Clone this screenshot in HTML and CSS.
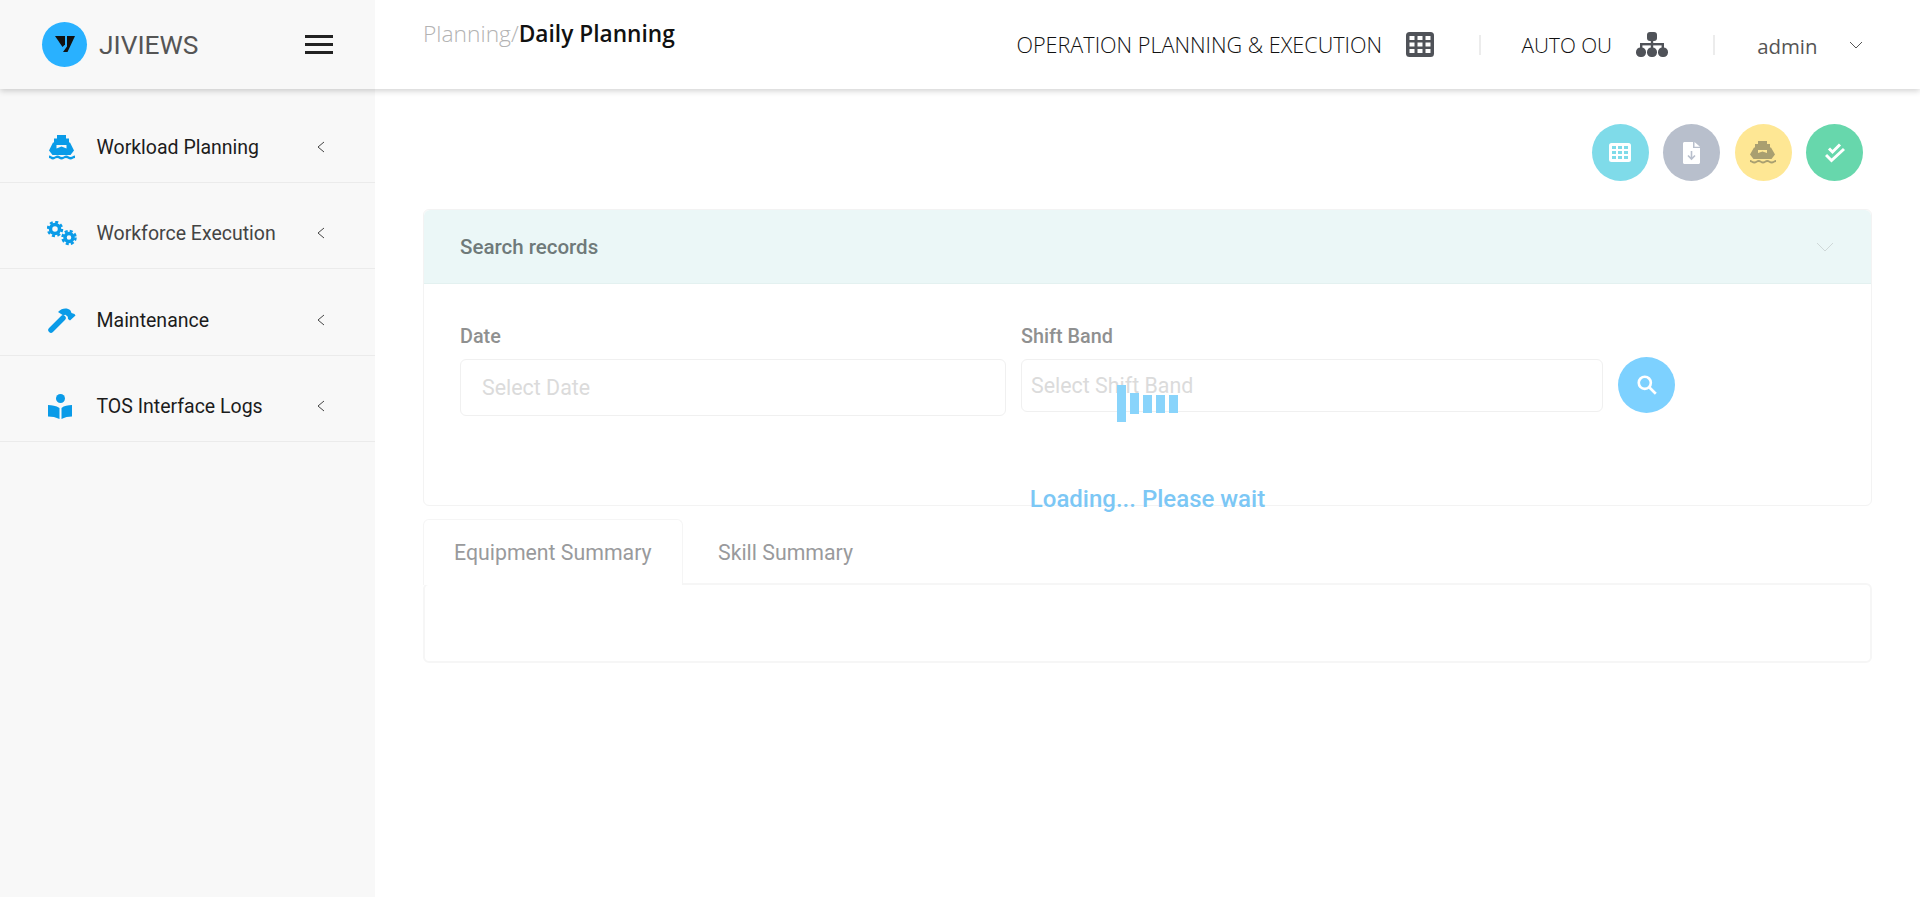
FILE: index.html
```html
<!DOCTYPE html>
<html lang="en">
<head>
    <meta charset="UTF-8">
    <meta name="viewport" content="width=device-width, initial-scale=1.0">
    <title>JIVIEWS - Daily Planning</title>
    <link rel="stylesheet" href="styles.css">
</head>
<body>
    <header class="topbar">
        <div class="brand">
            <span class="brand-logo">
                <svg viewBox="0 0 45 45" width="45" height="45">
                    <polygon fill="#111" points="13,14 23,14 23,22.500 20.500,25"/>
                    <polygon fill="#111" points="25,14 33,14 25.500,30 21,30 25,24.500"/>
                </svg>
            </span>
            <span class="brand-name">JIVIEWS</span>
            <button class="hamburger"><span></span><span></span><span></span></button>
        </div>
        <div class="topnav">
            <div class="crumbs"><span class="crumb-parent">Planning/</span><span class="crumb-current">Daily Planning</span></div>
            <div class="topnav-right">
                <span class="module-name">OPERATION PLANNING &amp; EXECUTION</span>
                <svg class="grid-icon" viewBox="0 0 28 25" width="28" height="25">
                    <rect width="28" height="25" rx="3.500" fill="#4f5258"/>
                    <g fill="#fff">
                        <rect x="3.500" y="4" width="5" height="4"/><rect x="11.500" y="4" width="5" height="4"/><rect x="19.500" y="4" width="5" height="4"/>
                        <rect x="3.500" y="10.500" width="5" height="4"/><rect x="11.500" y="10.500" width="5" height="4"/><rect x="19.500" y="10.500" width="5" height="4"/>
                        <rect x="3.500" y="17" width="5" height="4"/><rect x="11.500" y="17" width="5" height="4"/><rect x="19.500" y="17" width="5" height="4"/>
                    </g>
                </svg>
                <span class="nav-divider divider-one"></span>
                <span class="module-name">AUTO OU</span>
                <svg class="org-icon" viewBox="0 0 32 25" width="32" height="25">
                    <g fill="#4f5258">
                        <rect x="11" y="0" width="10" height="9" rx="3"/>
                        <rect x="14.800" y="8" width="2.400" height="5"/>
                        <rect x="4" y="11" width="24" height="2.400"/>
                        <rect x="4" y="11" width="2.400" height="5"/><rect x="25.600" y="11" width="2.400" height="5"/><rect x="14.800" y="11" width="2.400" height="5"/>
                        <rect x="0" y="15.500" width="10" height="9.500" rx="4.500"/><rect x="11" y="15.500" width="10" height="9.500" rx="4.500"/><rect x="22" y="15.500" width="10" height="9.500" rx="4.500"/>
                    </g>
                </svg>
                <span class="nav-divider divider-two"></span>
                <span class="user-name">admin</span>
                <svg class="user-caret" viewBox="0 0 14 8" width="14" height="8"><polyline points="1,1 7,7 13,1" fill="none" stroke="#555" stroke-width="1"/></svg>
            </div>
        </div>
    </header>

    <div class="layout">
        <aside class="sidebar">
            <nav>
                <a class="menu-item" href="#">
                    <svg class="menu-icon" viewBox="0 0 28 25" width="28" height="25">
                        <g fill="#0a9be8">
                            <path d="M9 0h9v3.500h3v5H6v-5h3z"/>
                            <path fill-rule="evenodd" d="M5 7.500h17l4 8-3.500 4.500h-18L1 15.500zM8.500 10v3.500l5-2 5 2V10z"/>
                            <path d="M1 20.500c2.200 0 2.200 1.500 4.300 1.500s2.200-1.500 4.300-1.500 2.200 1.500 4.400 1.500 2.200-1.500 4.300-1.500 2.200 1.500 4.300 1.500 2.200-1.500 4.400-1.500V23c-2.200 0-2.200 1.500-4.400 1.500S20.100 23 17.900 23 15.700 24.500 13.500 24.500 11.300 23 9.100 23s-2.200 1.500-4.300 1.500S3 23 1 23z"/>
                        </g>
                    </svg>
                    <span class="menu-label">Workload Planning</span>
                    <svg class="menu-caret" viewBox="0 0 8 12" width="8" height="12"><polyline points="7,1 1,6 7,11" fill="none" stroke="#444" stroke-width="1"/></svg>
                </a>
                <a class="menu-item" href="#">
                    <svg class="menu-icon" viewBox="0 0 30 25" width="30" height="25">
                        <g fill="none" stroke="#0a9be8">
                            <circle cx="8" cy="8" r="4.500" stroke-width="3.500"/>
                            <circle cx="8" cy="8" r="7" stroke-width="2.500" stroke-dasharray="3 2.500"/>
                            <circle cx="22" cy="16.500" r="4" stroke-width="3.500"/>
                            <circle cx="22" cy="16.500" r="6.500" stroke-width="2.500" stroke-dasharray="3 2.100"/>
                        </g>
                    </svg>
                    <span class="menu-label menu-label-soft">Workforce Execution</span>
                    <svg class="menu-caret" viewBox="0 0 8 12" width="8" height="12"><polyline points="7,1 1,6 7,11" fill="none" stroke="#444" stroke-width="1"/></svg>
                </a>
                <a class="menu-item" href="#">
                    <svg class="menu-icon" viewBox="0 0 28 25" width="28" height="25">
                        <line x1="3" y1="22" x2="15" y2="10" stroke="#0a9be8" stroke-width="5.500" stroke-linecap="round"/>
                        <path fill="#0a9be8" d="M10 4C14 0 19-.5 22.500 2.500l1 2.500 3 1 1 1.500-5.500 5-2-1.500-.2-2.300-2.300-2-2.500.5z"/>
                    </svg>
                    <span class="menu-label">Maintenance</span>
                    <svg class="menu-caret" viewBox="0 0 8 12" width="8" height="12"><polyline points="7,1 1,6 7,11" fill="none" stroke="#444" stroke-width="1"/></svg>
                </a>
                <a class="menu-item" href="#">
                    <svg class="menu-icon" viewBox="0 0 28 25" width="28" height="25">
                        <g fill="#0a9be8">
                            <circle cx="12.500" cy="4.500" r="4.500"/>
                            <path d="M0 11c4 0 8 .7 11.500 3v11C8 23.300 4 22.500 0 22.500z"/>
                            <path d="M24 11c-4 0-8 .7-10.500 3v11c3-1.700 7-2.500 10.500-2.500z"/>
                        </g>
                    </svg>
                    <span class="menu-label">TOS Interface Logs</span>
                    <svg class="menu-caret" viewBox="0 0 8 12" width="8" height="12"><polyline points="7,1 1,6 7,11" fill="none" stroke="#444" stroke-width="1"/></svg>
                </a>
            </nav>
        </aside>

        <main class="content">
            <div class="actions">
                <button class="round-btn btn-cyan">
                    <svg viewBox="0 0 22 19" width="22" height="19">
                        <rect width="22" height="19" rx="2.500" fill="#fff"/>
                        <g fill="#7fdbe9">
                            <rect x="3" y="3" width="4" height="3"/><rect x="9" y="3" width="4" height="3"/><rect x="15" y="3" width="4" height="3"/>
                            <rect x="3" y="8" width="4" height="3"/><rect x="9" y="8" width="4" height="3"/><rect x="15" y="8" width="4" height="3"/>
                            <rect x="3" y="13" width="4" height="3"/><rect x="9" y="13" width="4" height="3"/><rect x="15" y="13" width="4" height="3"/>
                        </g>
                    </svg>
                </button>
                <button class="round-btn btn-grey">
                    <svg viewBox="0 0 17 22" width="17" height="22">
                        <path fill="#fff" d="M1.500 0H10v6h7v14.500c0 .8-.7 1.500-1.500 1.500h-14C.7 22 0 21.300 0 20.500v-19C0 .7.700 0 1.500 0zM11.500 0 17 4.800h-5.500z"/>
                        <path fill="none" stroke="#b8bfcc" stroke-width="1.600" d="M8.500 9v8M5 13.500l3.500 3.500 3.500-3.500"/>
                    </svg>
                </button>
                <button class="round-btn btn-yellow">
                    <svg viewBox="0 0 26 23" width="26" height="23">
                        <g fill="#a99f70">
                            <path d="M8 0h9v3h3v4H5V3h3z"/>
                            <path fill-rule="evenodd" d="M4 6.500h17l4 7-3.500 4.500h-18L0 13.500zM8 9v3l4.500-1.500L17 12V9z"/>
                            <path d="M0 19c2 0 2 1.500 4.300 1.500S6.500 19 8.700 19s2 1.500 4.300 1.500 2-1.500 4.300-1.500 2 1.500 4.400 1.500S24 19 26 19v2c-2 0-2 1.500-4.300 1.500S19.500 21 17.300 21 15.300 22.500 13 22.500 11 21 8.700 21s-2 1.500-4.400 1.500S2 21 0 21z"/>
                        </g>
                    </svg>
                </button>
                <button class="round-btn btn-green">
                    <svg viewBox="0 0 20 20" width="20" height="20">
                        <path fill="none" stroke="#fff" stroke-width="3" d="M4 5.500 7.500 9 15 1.500M1 12l5.500 5.500L19 6"/>
                    </svg>
                </button>
            </div>

            <section class="search-card">
                <div class="search-head">
                    <span class="search-title">Search records</span>
                    <svg viewBox="0 0 18 10" width="18" height="10"><polyline points="1,1 9,9 17,1" fill="none" stroke="#cfd8d8" stroke-width="1"/></svg>
                </div>
                <div class="search-body">
                    <div class="field field-date">
                        <label>Date</label>
                        <input class="input input-date" type="text" placeholder="Select Date">
                    </div>
                    <div class="field field-shift">
                        <label>Shift Band</label>
                        <input class="input input-shift" type="text" placeholder="Select Shift Band">
                    </div>
                    <button class="search-btn">
                        <svg viewBox="0 0 20 20" width="22" height="22">
                            <circle cx="8" cy="8" r="5.500" fill="none" stroke="#fff" stroke-width="2.400"/>
                            <line x1="12" y1="12" x2="18" y2="18" stroke="#fff" stroke-width="2.400"/>
                        </svg>
                    </button>
                </div>
            </section>

            <div class="tabs">
                <a class="tab tab-active" href="#">Equipment Summary</a>
                <a class="tab" href="#">Skill Summary</a>
            </div>
            <div class="tab-panel"></div>

            <div class="loader">
                <div class="loader-bars">
                    <span class="bar bar-one"></span>
                    <span class="bar bar-two"></span>
                    <span class="bar"></span>
                    <span class="bar"></span>
                    <span class="bar"></span>
                </div>
                <div class="loader-text">Loading... Please wait</div>
            </div>
        </main>
    </div>
</body>
</html>
```

FILE: styles.css
```css
body {
    font-family: 'Roboto', sans-serif;
    font-size: 16px;
    color: #343a40;
    background-color: #ffffff;
    margin: 0;
    height: 897px;
    overflow: hidden;
}

a {
    text-decoration: none;
}

button {
    border: none;
    padding: 0;
    cursor: pointer;
}

/* top bar */
.topbar {
    display: flex;
    height: 89px;
    background-color: #ffffff;
    box-shadow: 0 2px 6px rgba(0,0,0,0.18);
    position: relative;
    z-index: 2;
}

.brand {
    width: 375px;
    flex: none;
    display: flex;
    align-items: center;
    background-color: #f8f8f8;
    padding-left: 42px;
    box-sizing: border-box;
}

.brand-logo {
    width: 45px;
    height: 45px;
    border-radius: 50%;
    background-color: #29b1ff;
    display: block;
}

.brand-logo svg {
    display: block;
}

.brand-name {
    font-size: 26.3px;
    color: #555555;
    margin-left: 12px;
    width: 206px;
}

.hamburger {
    width: 28px;
    background: none;
    display: flex;
    flex-direction: column;
    gap: 5px;
}

.hamburger span {
    display: block;
    height: 3px;
    background-color: #222222;
}

.topnav {
    flex: 1;
    display: flex;
    justify-content: space-between;
    padding: 0 48px 0 48px;
}

.crumbs {
    font-family: 'Open Sans', sans-serif;
    line-height: 30px;
    margin-top: 19px;
}

.crumb-parent {
    font-size: 22.8px;
    font-weight: 300;
    color: #b3b3b3;
}

.crumb-current {
    font-size: 22.7px;
    font-weight: 600;
    color: #111111;
}

.topnav-right {
    display: flex;
    align-items: center;
    font-family: 'Open Sans', sans-serif;
}

.module-name {
    font-size: 20.8px;
    font-weight: 300;
    color: #111111;
}

.module-name:first-child {
    font-size: 21.6px;
}

.grid-icon {
    margin-left: 24px;
}

.org-icon {
    margin-left: 24px;
}

.nav-divider {
    width: 2px;
    height: 20px;
    background-color: #ececec;
}

.divider-one {
    margin: 0 40.5px 0 45px;
}

.divider-two {
    margin: 0 42.6px 0 44.5px;
}

.user-name {
    font-size: 20.4px;
    color: #555555;
    margin-top: 2px;
}

.user-caret {
    margin-left: 31.5px;
    margin-right: 9px;
}

/* sidebar */
.layout {
    display: flex;
    height: 808px;
}

.sidebar {
    width: 375px;
    flex: none;
    background-color: #f8f8f8;
    padding-top: 7.6px;
    box-sizing: border-box;
}

.menu-item {
    display: flex;
    align-items: flex-end;
    height: 85.4px;
    border-bottom: 1px solid #ebebeb;
    padding-left: 47px;
    color: #1c1c1c;
    font-size: 19.5px;
}

.menu-icon {
    width: 30px;
    margin-bottom: 22px;
    flex: none;
}

.menu-label {
    margin-left: 19.5px;
    width: 220.5px;
    line-height: 22px;
    margin-bottom: 23px;
}

.menu-label-soft {
    color: #444444;
}

.menu-caret {
    margin-bottom: 29px;
}

/* main content */
.content {
    flex: 1;
    position: relative;
    padding: 35px 48px 0;
    box-sizing: border-box;
}

.actions {
    display: flex;
    justify-content: flex-end;
    gap: 14.5px;
    padding-right: 9px;
    margin-bottom: 28px;
}

.round-btn {
    width: 57px;
    height: 57px;
    border-radius: 50%;
    display: flex;
    align-items: center;
    justify-content: center;
}

.btn-cyan {
    background-color: #7fdbe9;
}

.btn-grey {
    background-color: #b8bfcc;
}

.btn-yellow {
    background-color: #fee794;
}

.btn-green {
    background-color: #67d7ac;
}

.search-card {
    border: 1px solid #f3f3f3;
    border-radius: 6px;
}

.search-head {
    display: flex;
    align-items: center;
    justify-content: space-between;
    height: 73px;
    padding: 0 37px 0 36px;
    background-color: #ebf7f7;
    border-bottom: 1px solid #e3f1f0;
    border-radius: 6px 6px 0 0;
}

.search-title {
    font-size: 20.5px;
    font-weight: 500;
    color: #6f7a7a;
}

.search-body {
    display: flex;
    align-items: flex-start;
    gap: 15px;
    padding: 41px 36px 89px;
}

.field label {
    display: block;
    font-size: 19.8px;
    font-weight: 500;
    line-height: 24px;
    color: #8f9090;
    margin-bottom: 10px;
}

.field-date {
    width: 546px;
}

.field-shift {
    width: 582px;
}

.input {
    display: block;
    width: 100%;
    box-sizing: border-box;
    border: 1px solid #f0f0f0;
    border-radius: 6px;
    background-color: #ffffff;
    font-family: 'Roboto', sans-serif;
    font-size: 21.4px;
    outline: none;
}

.input::placeholder {
    color: #dbdbdb;
    opacity: 1;
}

.input-date {
    height: 57px;
    padding: 0 21px;
}

.input-shift {
    height: 53px;
    padding: 0 9px;
}

.search-btn {
    width: 57px;
    height: 56px;
    margin-top: 32px;
    border-radius: 50%;
    background-color: #7dd1ff;
    display: flex;
    align-items: center;
    justify-content: center;
}

.tabs {
    display: flex;
    margin-top: 13px;
    height: 64px;
}

.tab {
    display: flex;
    align-items: center;
    font-size: 21.3px;
    color: #999a9c;
    padding: 2px 35px 0;
    white-space: nowrap;
}

.tab-active {
    width: 260px;
    box-sizing: border-box;
    padding: 0 0 0 30px;
    border: 1px solid #f5f5f5;
    border-bottom: none;
    border-radius: 6px 6px 0 0;
    background-color: #ffffff;
    position: relative;
    z-index: 1;
    margin-bottom: -2px;
}

.tab-panel {
    height: 76px;
    border: 2px solid #f6f6f6;
    border-radius: 6px;
}

/* loading overlay */
.loader {
    position: absolute;
    top: 0;
    left: 0;
    right: 0;
    padding-top: 296px;
    display: flex;
    flex-direction: column;
    align-items: center;
    z-index: 3;
}

.loader-bars {
    display: flex;
    align-items: center;
    gap: 4px;
    height: 37px;
}

.bar {
    width: 9px;
    height: 18px;
    background-color: #89d4fb;
}

.bar-one {
    height: 37px;
}

.bar-two {
    height: 21px;
}

.loader-text {
    font-size: 24px;
    font-weight: 500;
    line-height: 26px;
    color: #7cc7f5;
    margin-top: 64px;
}
```
